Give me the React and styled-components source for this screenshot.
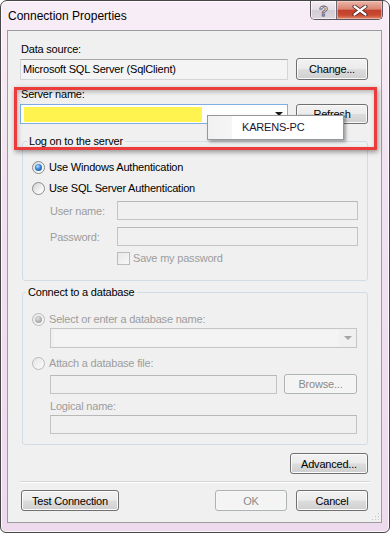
import React from "react";
import styled, { createGlobalStyle } from "styled-components";

const GlobalStyle = createGlobalStyle`
  html, body {
    margin: 0;
    padding: 0;
    background: #ffffff;
  }
  body {
    width: 390px;
    height: 533px;
    overflow: hidden;
    font-family: "Liberation Sans", Arial, sans-serif;
  }
  * {
    box-sizing: border-box;
  }
`;

const Window = styled.div`
  width: 390px;
  height: 533px;
  display: flex;
  flex-direction: column;
  border: 1px solid #464646;
  border-radius: 7px 7px 6px 6px;
  background: linear-gradient(180deg, #f8eef7 0%, #f2e1f0 35%, #eddaed 100%);
  box-shadow: inset 0 0 0 1px rgba(255, 255, 255, 0.8);
  overflow: hidden;
`;

const TitleBar = styled.div`
  display: flex;
  align-items: flex-start;
  justify-content: space-between;
  height: 29px;
  flex-shrink: 0;
  padding: 0 6px 0 7px;
`;

const Title = styled.div`
  margin-top: 7px;
  font-size: 12px;
  line-height: 16px;
  color: #000;
`;

const CaptionGroup = styled.div`
  display: flex;
  height: 19px;
  border: 1px solid #5d5660;
  border-top: none;
  border-radius: 0 0 5px 5px;
  overflow: hidden;
`;

const HelpButton = styled.div`
  width: 26px;
  display: flex;
  align-items: center;
  justify-content: center;
  border-right: 1px solid #6f6872;
  background: linear-gradient(180deg, #f3eef3 0%, #e4dde4 50%, #d4ccd5 51%, #ddd6de 100%);
  box-shadow: inset 0 0 0 1px rgba(255, 255, 255, 0.6);
  font: bold 15px "Liberation Sans", Arial, sans-serif;
  color: #f4f4f6;
  -webkit-text-stroke: 0.8px #5e5866;
  line-height: 1;
`;

const CloseButton = styled.div`
  width: 45px;
  display: flex;
  align-items: center;
  justify-content: center;
  background: linear-gradient(180deg, #ecb6aa 0%, #da8572 45%, #c2402a 52%, #c84a31 78%, #e08a6d 100%);
  box-shadow: inset 0 0 0 1px rgba(255, 220, 210, 0.5);
`;

const Client = styled.div`
  position: relative;
  flex: 1;
  display: flex;
  flex-direction: column;
  margin: 0 7px 9px 6px;
  padding: 11px 13px 0 12px;
  background: #f0f0f0;
  border: 1px solid #9c9c9c;
`;

const Label = styled.div`
  font-size: 11px;
  letter-spacing: -0.2px;
  line-height: 14px;
  white-space: nowrap;
  color: ${({ $disabled }) => ($disabled ? "#9d9d9d" : "#000")};
  margin-top: ${({ $mt }) => $mt || 0}px;
  margin-left: ${({ $ml }) => $ml || 0}px;
  width: ${({ $w }) => ($w ? `${$w}px` : "auto")};
  flex-shrink: 0;
`;

const Row = styled.div`
  display: flex;
  align-items: center;
  gap: ${({ $gap }) => $gap || 0}px;
  height: ${({ $h }) => $h}px;
  margin-top: ${({ $mt }) => $mt || 0}px;
  margin-left: ${({ $ml }) => $ml || 0}px;
`;

const TextBox = styled.div`
  width: ${({ $w }) => $w}px;
  height: ${({ $h }) => $h || 19}px;
  flex-shrink: 0;
  padding-left: 2px;
  font-size: 11px;
  letter-spacing: -0.2px;
  line-height: ${({ $h }) => ($h || 19) - 2}px;
  white-space: nowrap;
  color: #000;
  background: ${({ $disabled }) => ($disabled ? "#f0f0f0" : "#f4f4f4")};
  border: 1px solid ${({ $disabled }) => ($disabled ? "#c3c3c3" : "#d3d5d8")};
  border-top-color: ${({ $disabled }) => ($disabled ? "#b8b8b8" : "#a5a8ad")};
`;

const Combo = styled.div`
  width: ${({ $w }) => $w}px;
  height: 20px;
  flex-shrink: 0;
  display: flex;
  align-items: center;
  padding: 0 4px 0 3px;
  background: ${({ $disabled }) => ($disabled ? "#f0f0f0" : "#ffffff")};
  border: 1px solid ${({ $disabled }) => ($disabled ? "#c6c6c6" : "#80aee0")};
`;

const ComboField = styled.div`
  height: ${({ $h }) => $h}px;
  width: ${({ $w }) => $w}px;
  background: ${({ $color }) => $color};
`;

const ComboArrow = styled.span`
  margin-left: auto;
  width: 0;
  height: 0;
  border-left: 4px solid transparent;
  border-right: 4px solid transparent;
  border-top: 4px solid ${({ $disabled }) => ($disabled ? "#a4a4a4" : "#1a1a1a")};
`;

const Button = styled.button`
  width: ${({ $w }) => $w}px;
  height: ${({ $h }) => $h || 21}px;
  flex-shrink: 0;
  margin: 0;
  padding: 0;
  font-family: inherit;
  font-size: 11px;
  letter-spacing: -0.2px;
  color: ${({ disabled }) => (disabled ? "#8a8a8a" : "#000")};
  border: 1px solid ${({ disabled }) => (disabled ? "#adb2b5" : "#707070")};
  border-radius: 3px;
  background: ${({ disabled }) =>
    disabled
      ? "#f4f4f4"
      : "linear-gradient(180deg, #f2f2f2 0%, #ebebeb 48%, #dddddd 52%, #cfcfcf 100%)"};
  box-shadow: inset 0 0 0 1px ${({ disabled }) => (disabled ? "#f7f7f7" : "#fbfbfb")};
`;

const Group = styled.fieldset`
  width: 346px;
  margin: ${({ $mt }) => $mt}px 0 0 2px;
  padding: 0;
  min-inline-size: 0;
  border: 1px solid #d3dce2;
  border-radius: 3px;
`;

const Legend = styled.legend`
  margin-left: ${({ $ml }) => $ml}px;
  padding: 0 2px;
  font-size: 11px;
  letter-spacing: -0.2px;
  line-height: 14px;
  color: #000;
`;

const GroupBody = styled.div`
  display: flex;
  flex-direction: column;
  padding: ${({ $pt }) => $pt}px 0 ${({ $pb }) => $pb}px 9px;
`;

const RadioRow = styled.div`
  display: flex;
  align-items: center;
  gap: 4px;
  height: 18px;
  margin-top: ${({ $mt }) => $mt || 0}px;
`;

const RadioCircle = styled.span`
  width: 13px;
  height: 13px;
  flex-shrink: 0;
  border-radius: 50%;
  display: flex;
  align-items: center;
  justify-content: center;
  border: 1px solid ${({ $disabled }) => ($disabled ? "#b9b9b9" : "#8b8c8c")};
  background: ${({ $disabled }) =>
    $disabled
      ? "linear-gradient(135deg, #e6e6e6 0%, #fbfbfb 100%)"
      : "linear-gradient(135deg, #d2d2d2 0%, #f7f7f7 70%, #ffffff 100%)"};

  &::after {
    content: "";
    display: ${({ $checked }) => ($checked ? "block" : "none")};
    width: 7px;
    height: 7px;
    border-radius: 50%;
    background: ${({ $disabled }) =>
      $disabled
        ? "radial-gradient(circle at 40% 35%, #e2e2e2 0%, #b0b0b0 55%, #8f8f8f 100%)"
        : "radial-gradient(circle at 40% 35%, #bfe4ff 0%, #3a8be0 40%, #0f3e7c 100%)"};
  }
`;

const CheckBox = styled.span`
  width: 13px;
  height: 13px;
  flex-shrink: 0;
  border: 1px solid #bcbcbc;
  background: linear-gradient(135deg, #e8e8e8 0%, #f7f7f7 100%);
`;

const Separator = styled.div`
  height: 2px;
  margin: 7px -2px 0 0;
  border-top: 1px solid #d5d5d5;
  border-bottom: 1px solid #ffffff;
`;

const ButtonBar = styled.div`
  display: flex;
  gap: 9px;
  margin: 7px 0 0 1px;
`;

const Spacer = styled.div`
  flex: 1;
`;

const RightButton = styled.div`
  display: flex;
  justify-content: flex-end;
  margin-top: 8px;
`;

const Highlight = styled.div`
  position: absolute;
  left: 6px;
  top: 56px;
  width: 363px;
  height: 63px;
  border: 3px solid #ec3b3b;
  box-shadow: 1px 2px 5px rgba(0, 0, 0, 0.4), inset 1px 2px 4px rgba(0, 0, 0, 0.25);
  pointer-events: none;
`;

const Popup = styled.div`
  position: absolute;
  left: 199px;
  top: 84px;
  width: 137px;
  height: 25px;
  display: flex;
  background: #ffffff;
  border: 1px solid #979797;
  box-shadow: 2px 2px 3px rgba(0, 0, 0, 0.35);
`;

const PopupGutter = styled.div`
  width: 25px;
  background: linear-gradient(90deg, #f1f1f1 0%, #f6f6f6 100%);
  border-right: 1px solid #ffffff;
`;

const PopupItem = styled.div`
  padding-left: 9px;
  font-size: 11px;
  letter-spacing: -0.2px;
  line-height: 23px;
  color: #161634;
`;

const Grip = styled.svg`
  position: absolute;
  right: 1px;
  bottom: 1px;
`;

const Radio = ({ checked, disabled, children, mt }) => (
  <RadioRow $mt={mt}>
    <RadioCircle $checked={checked} $disabled={disabled} />
    <Label $disabled={disabled}>{children}</Label>
  </RadioRow>
);

export default function App() {
  return (
    <>
      <GlobalStyle />
      <Window>
        <TitleBar>
          <Title>Connection Properties</Title>
          <CaptionGroup>
            <HelpButton>?</HelpButton>
            <CloseButton>
              <svg width="16" height="11" viewBox="0 0 16 11">
                <path d="M2.5 1.5 L13.5 9.5 M13.5 1.5 L2.5 9.5" stroke="#4a2420" strokeWidth="4" strokeLinecap="round" />
                <path d="M2.5 1.5 L13.5 9.5 M13.5 1.5 L2.5 9.5" stroke="#ffffff" strokeWidth="2.2" strokeLinecap="round" />
              </svg>
            </CloseButton>
          </CaptionGroup>
        </TitleBar>

        <Client>
          <Label $ml={1}>Data source:</Label>
          <Row $h={22} $gap={8} $mt={2}>
            <TextBox $w={268} $h={21}>Microsoft SQL Server (SqlClient)</TextBox>
            <Button $w={72} $h={22}>Change...</Button>
          </Row>

          <Label $ml={1} $mt={7}>Server name:</Label>
          <Row $h={20} $gap={8} $mt={3}>
            <Combo $w={268}>
              <ComboField $w={178} $h={15} $color="#fff34f" />
              <ComboArrow />
            </Combo>
            <Button $w={72} $h={20}>Refresh</Button>
          </Row>

          <Group $mt={10}>
            <Legend $ml={4}>Log on to the server</Legend>
            <GroupBody $pt={10} $pb={15}>
              <Radio checked>Use Windows Authentication</Radio>
              <Radio mt={3}>Use SQL Server Authentication</Radio>
              <Row $h={19} $mt={4} $ml={18}>
                <Label $disabled $w={67}>User name:</Label>
                <TextBox $w={241} $disabled />
              </Row>
              <Row $h={19} $mt={7} $ml={18}>
                <Label $disabled $w={67}>Password:</Label>
                <TextBox $w={241} $disabled />
              </Row>
              <Row $h={14} $mt={5} $ml={85} $gap={3}>
                <CheckBox />
                <Label $disabled>Save my password</Label>
              </Row>
            </GroupBody>
          </Group>

          <Group $mt={4}>
            <Legend $ml={3}>Connect to a database</Legend>
            <GroupBody $pt={11} $pb={10}>
              <Radio checked disabled>Select or enter a database name:</Radio>
              <Row $h={20} $ml={18}>
                <Combo $w={307} $disabled>
                  <ComboField $w={285} $h={16} $color="#f4f4f4" />
                  <ComboArrow $disabled />
                </Combo>
              </Row>
              <Radio disabled mt={6}>Attach a database file:</Radio>
              <Row $h={20} $mt={2} $ml={18} $gap={7}>
                <TextBox $w={227} $disabled />
                <Button $w={73} $h={20} disabled>Browse...</Button>
              </Row>
              <Label $disabled $ml={18} $mt={5}>Logical name:</Label>
              <Row $h={19} $mt={2} $ml={18}>
                <TextBox $w={307} $disabled />
              </Row>
            </GroupBody>
          </Group>

          <RightButton>
            <Button $w={78}>Advanced...</Button>
          </RightButton>

          <Separator />

          <ButtonBar>
            <Button $w={98}>Test Connection</Button>
            <Spacer />
            <Button $w={72} disabled>OK</Button>
            <Button $w={72}>Cancel</Button>
          </ButtonBar>

          <Highlight />
          <Popup>
            <PopupGutter />
            <PopupItem>KARENS-PC</PopupItem>
          </Popup>

          <Grip width="9" height="9" viewBox="0 0 9 9">
            <g fill="#c4c4c4">
              <rect x="7" y="1" width="1" height="1" />
              <rect x="4" y="4" width="1" height="1" />
              <rect x="7" y="4" width="1" height="1" />
              <rect x="1" y="7" width="1" height="1" />
              <rect x="4" y="7" width="1" height="1" />
              <rect x="7" y="7" width="1" height="1" />
            </g>
          </Grip>
        </Client>
      </Window>
    </>
  );
}
